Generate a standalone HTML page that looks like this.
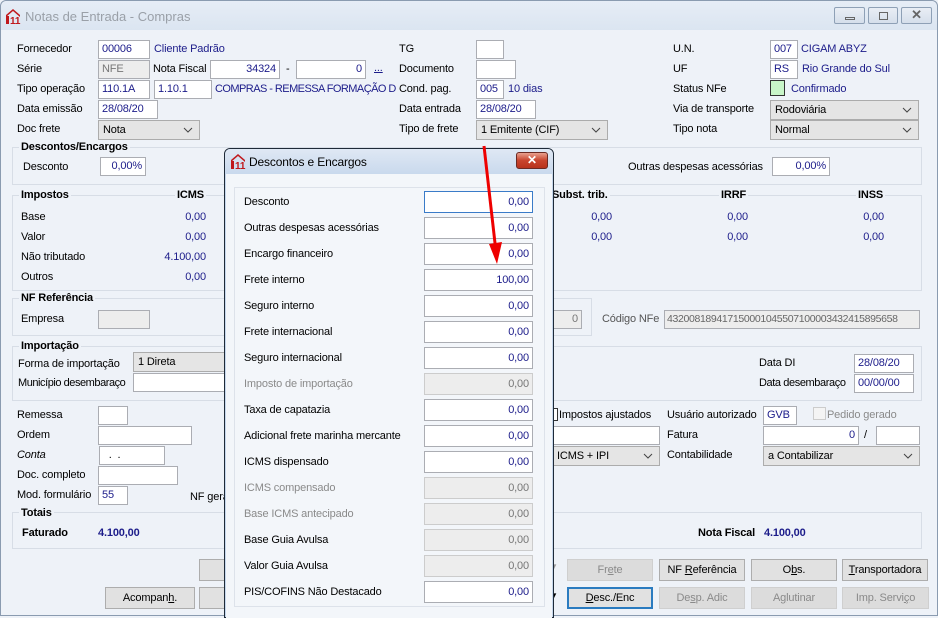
<!DOCTYPE html>
<html><head><meta charset="utf-8">
<style>
*{box-sizing:border-box;margin:0;padding:0}
body{width:938px;height:616px;overflow:hidden;font-family:"Liberation Sans",Tahoma,sans-serif;font-size:11px;letter-spacing:-0.15px;color:#000;background:#eef2f8;position:relative}
.a{position:absolute;white-space:nowrap}
.t{position:absolute;white-space:nowrap;line-height:14px;top:0}
.i{position:absolute;background:#fff;border:1px solid #abadb3;height:19px;line-height:17px;padding:0 3px;color:#1c1c8a;white-space:nowrap;overflow:hidden}
.r{text-align:right}
.g{background:#ededed;color:#777}
.s{position:absolute;background:#e5e5e5;border:1px solid #acacac;height:20px;line-height:18px;padding:0 4px;white-space:nowrap;overflow:hidden}
.s svg{position:absolute;right:6px;top:6px}
.b{font-weight:bold}
.v{color:#1c1c8a}
.box{position:absolute;border:1px solid #d7dde6}
.gt{position:absolute;font-weight:bold;background:#eef2f8;padding:0 2px;line-height:14px}
.btn{position:absolute;background:#e1e1e1;border:1px solid #adadad;height:22px;line-height:20px;text-align:center}
.dis{color:#8a8a8a;background:#dcdcdc;border-color:#cfcfcf}
.dl{color:#8a8a8a}
u{text-decoration:underline}
</style></head><body>
<div class="a" style="left:0;top:0;width:938px;height:616px;border:1px solid #8a9bb0;border-radius:6px 6px 0 0"></div>
<div class="a" style="left:1px;top:1px;width:936px;height:29px;background:linear-gradient(#e6edf6,#dbe5f1);border-radius:6px 6px 0 0"></div>
<svg class="a" style="left:5px;top:8px" width="16" height="16" viewBox="0 0 16 16"><path d="M1 7 L8 1 L15 7 L15 9 L8 3 L1 9Z" fill="#c0181c"/><rect x="1" y="8" width="3" height="8" fill="#c0181c"/><text x="5" y="16" font-size="10" font-weight="bold" fill="#c0181c" font-family="Liberation Sans">11</text></svg>
<div class="t" style="left:25px;top:10px;font-size:13px;color:#9aa0a8;letter-spacing:0">Notas de Entrada - Compras</div>
<div class="a" style="left:834px;top:7px;width:31px;height:17px;border:1px solid #8ea0b6;border-radius:2px;background:linear-gradient(#e9eef5,#d5dfeb)"><div class="a" style="left:10px;top:9px;width:10px;height:3px;border:1px solid #666"></div></div>
<div class="a" style="left:868px;top:7px;width:30px;height:17px;border:1px solid #8ea0b6;border-radius:2px;background:linear-gradient(#e9eef5,#d5dfeb)"><div class="a" style="left:10px;top:4px;width:9px;height:8px;border:1px solid #666"></div></div>
<div class="a" style="left:901px;top:7px;width:31px;height:17px;border:1px solid #8ea0b6;border-radius:2px;background:linear-gradient(#e9eef5,#d5dfeb);text-align:center;line-height:14px;font-size:13px;font-weight:bold;color:#666">✕</div>

<div class="t" style="left:17px;top:42px">Fornecedor</div>
<div class="i" style="left:98px;top:40px;width:52px">00006</div>
<div class="t v" style="left:154px;top:42px">Cliente Padrão</div>
<div class="t" style="left:17px;top:62px">Série</div>
<div class="i g" style="left:98px;top:60px;width:52px">NFE</div>
<div class="t" style="left:153px;top:62px">Nota Fiscal</div>
<div class="i r" style="left:210px;top:60px;width:70px">34324</div>
<div class="t" style="left:286px;top:62px">-</div>
<div class="i r" style="left:296px;top:60px;width:70px">0</div>
<div class="t v" style="left:374px;top:61px;text-decoration:underline">...</div>
<div class="t" style="left:17px;top:82px">Tipo operação</div>
<div class="i" style="left:98px;top:80px;width:52px">110.1A</div>
<div class="i" style="left:154px;top:80px;width:58px">1.10.1</div>
<div class="t v" style="left:215px;top:82px;letter-spacing:-0.55px">COMPRAS - REMESSA FORMAÇÃO D</div>
<div class="t" style="left:17px;top:102px">Data emissão</div>
<div class="i" style="left:98px;top:100px;width:60px">28/08/20</div>
<div class="t" style="left:17px;top:122px">Doc frete</div>
<div class="s" style="left:98px;top:120px;width:102px">Nota<svg width="10" height="6"><path d="M1 1 L5 5 L9 1" fill="none" stroke="#444"/></svg></div>

<div class="t" style="left:399px;top:42px">TG</div>
<div class="i" style="left:476px;top:40px;width:28px"></div>
<div class="t" style="left:399px;top:62px">Documento</div>
<div class="i" style="left:476px;top:60px;width:40px"></div>
<div class="t" style="left:399px;top:82px">Cond. pag.</div>
<div class="i" style="left:476px;top:80px;width:28px">005</div>
<div class="t v" style="left:508px;top:82px">10 dias</div>
<div class="t" style="left:399px;top:102px">Data entrada</div>
<div class="i" style="left:476px;top:100px;width:60px">28/08/20</div>
<div class="t" style="left:399px;top:122px">Tipo de frete</div>
<div class="s" style="left:476px;top:120px;width:132px">1 Emitente (CIF)<svg width="10" height="6"><path d="M1 1 L5 5 L9 1" fill="none" stroke="#444"/></svg></div>

<div class="t" style="left:673px;top:42px">U.N.</div>
<div class="i" style="left:770px;top:40px;width:28px">007</div>
<div class="t v" style="left:801px;top:42px">CIGAM ABYZ</div>
<div class="t" style="left:673px;top:62px">UF</div>
<div class="i" style="left:770px;top:60px;width:28px">RS</div>
<div class="t v" style="left:802px;top:62px">Rio Grande do Sul</div>
<div class="t" style="left:673px;top:82px">Status NFe</div>
<div class="a" style="left:770px;top:80px;width:15px;height:16px;background:#c8f5c8;border:1px solid #333"></div>
<div class="t v" style="left:791px;top:82px">Confirmado</div>
<div class="t" style="left:673px;top:102px">Via de transporte</div>
<div class="s" style="left:770px;top:100px;width:149px">Rodoviária<svg width="10" height="6"><path d="M1 1 L5 5 L9 1" fill="none" stroke="#444"/></svg></div>
<div class="t" style="left:673px;top:122px">Tipo nota</div>
<div class="s" style="left:770px;top:120px;width:149px">Normal<svg width="10" height="6"><path d="M1 1 L5 5 L9 1" fill="none" stroke="#444"/></svg></div>

<div class="box" style="left:12px;top:147px;width:910px;height:38px"></div>
<div class="gt" style="left:19px;top:140px">Descontos/Encargos</div>
<div class="t" style="left:23px;top:160px">Desconto</div>
<div class="i r" style="left:100px;top:157px;width:46px">0,00%</div>
<div class="t" style="left:628px;top:160px">Outras despesas acessórias</div>
<div class="i r" style="left:772px;top:157px;width:58px">0,00%</div>

<div class="box" style="left:12px;top:195px;width:910px;height:96px"></div>
<div class="gt" style="left:19px;top:188px">Impostos</div>
<div class="gt" style="left:175px;top:188px">ICMS</div>
<div class="gt" style="left:550px;top:188px">Subst. trib.</div>
<div class="gt" style="left:719px;top:188px">IRRF</div>
<div class="gt" style="left:856px;top:188px">INSS</div>
<div class="t" style="left:21px;top:210px">Base</div>
<div class="t" style="left:21px;top:230px">Valor</div>
<div class="t" style="left:21px;top:250px">Não tributado</div>
<div class="t" style="left:21px;top:270px">Outros</div>
<div class="t v r" style="left:140px;width:66px;top:210px">0,00</div>
<div class="t v r" style="left:140px;width:66px;top:230px">0,00</div>
<div class="t v r" style="left:140px;width:66px;top:250px">4.100,00</div>
<div class="t v r" style="left:140px;width:66px;top:270px">0,00</div>
<div class="t v r" style="left:560px;width:52px;top:210px">0,00</div>
<div class="t v r" style="left:560px;width:52px;top:230px">0,00</div>
<div class="t v r" style="left:696px;width:52px;top:210px">0,00</div>
<div class="t v r" style="left:696px;width:52px;top:230px">0,00</div>
<div class="t v r" style="left:832px;width:52px;top:210px">0,00</div>
<div class="t v r" style="left:832px;width:52px;top:230px">0,00</div>

<div class="box" style="left:12px;top:298px;width:580px;height:38px"></div>
<div class="gt" style="left:19px;top:291px">NF Referência</div>
<div class="t" style="left:21px;top:312px">Empresa</div>
<div class="i g" style="left:98px;top:310px;width:52px"></div>
<div class="i g r" style="left:540px;top:310px;width:42px;color:#777">0</div>
<div class="t" style="left:602px;top:312px;color:#555">Código NFe</div>
<div class="i g" style="left:664px;top:310px;width:256px;color:#666;padding:0 2px;font-size:10.5px;letter-spacing:-0.35px">43200818941715000104550710000343241589565&#56;</div>

<div class="box" style="left:12px;top:346px;width:910px;height:55px"></div>
<div class="gt" style="left:19px;top:339px">Importação</div>
<div class="t" style="left:18px;top:357px">Forma de importação</div>
<div class="s" style="left:133px;top:352px;width:100px">1 Direta</div>
<div class="t" style="left:18px;top:376px;letter-spacing:-0.45px">Município desembaraço</div>
<div class="i" style="left:133px;top:373px;width:100px"></div>
<div class="t" style="left:759px;top:356px">Data DI</div>
<div class="i" style="left:854px;top:354px;width:60px">28/08/20</div>
<div class="t" style="left:759px;top:376px;letter-spacing:-0.4px">Data desembaraço</div>
<div class="i" style="left:854px;top:374px;width:60px">00/00/00</div>

<div class="t" style="left:17px;top:408px">Remessa</div>
<div class="i" style="left:98px;top:406px;width:30px"></div>
<div class="t" style="left:17px;top:428px">Ordem</div>
<div class="i" style="left:98px;top:426px;width:94px"></div>
<div class="t" style="left:17px;top:448px;font-style:italic">Conta</div>
<div class="i" style="left:99px;top:446px;width:66px;color:#000">&nbsp;&nbsp;.&nbsp;&nbsp;.</div>
<div class="t" style="left:17px;top:468px">Doc. completo</div>
<div class="i" style="left:98px;top:466px;width:80px"></div>
<div class="t" style="left:17px;top:488px">Mod. formulário</div>
<div class="i" style="left:98px;top:486px;width:30px">55</div>
<div class="t" style="left:190px;top:490px">NF gera</div>

<div class="a" style="left:551px;top:408px;width:7px;height:13px;border:1px solid #333;border-left:none;background:#fff"></div>
<div class="t" style="left:559px;top:408px">Impostos ajustados</div>
<div class="t" style="left:667px;top:408px">Usuário autorizado</div>
<div class="i" style="left:763px;top:406px;width:34px">GVB</div>
<div class="a" style="left:813px;top:407px;width:13px;height:13px;border:1px solid #ccc;background:#f4f4f4"></div>
<div class="t" style="left:827px;top:408px;color:#8a8a8a">Pedido gerado</div>
<div class="i" style="left:552px;top:426px;width:108px"></div>
<div class="t" style="left:667px;top:428px">Fatura</div>
<div class="i r" style="left:763px;top:426px;width:96px">0</div>
<div class="t" style="left:864px;top:428px">/</div>
<div class="i" style="left:876px;top:426px;width:44px"></div>
<div class="s" style="left:552px;top:446px;width:108px">ICMS + IPI<svg width="10" height="6"><path d="M1 1 L5 5 L9 1" fill="none" stroke="#444"/></svg></div>
<div class="t" style="left:667px;top:448px">Contabilidade</div>
<div class="s" style="left:763px;top:446px;width:157px">a Contabilizar<svg width="10" height="6"><path d="M1 1 L5 5 L9 1" fill="none" stroke="#444"/></svg></div>

<div class="box" style="left:12px;top:512px;width:910px;height:37px"></div>
<div class="gt" style="left:19px;top:506px">Totais</div>
<div class="t b" style="left:22px;top:526px">Faturado</div>
<div class="t b v" style="left:98px;top:526px">4.100,00</div>
<div class="t b" style="left:698px;top:526px">Nota Fiscal</div>
<div class="t b v" style="left:764px;top:526px">4.100,00</div>

<div class="btn" style="left:199px;top:559px;width:30px"></div>
<div class="btn" style="left:199px;top:587px;width:30px"></div>
<div class="btn" style="left:105px;top:587px;width:90px">Acompan<u>h</u>.</div>
<div class="btn dis" style="left:567px;top:559px;width:86px">Fr<u>e</u>te</div>
<div class="btn" style="left:659px;top:559px;width:86px">NF <u>R</u>eferência</div>
<div class="btn" style="left:751px;top:559px;width:86px">O<u>b</u>s.</div>
<div class="btn" style="left:842px;top:559px;width:86px"><u>T</u>ransportadora</div>
<div class="btn" style="left:567px;top:587px;width:86px;border:2px solid #2a7bc0;line-height:18px"><u>D</u>esc./Enc</div>
<div class="btn dis" style="left:659px;top:587px;width:86px">De<u>s</u>p. Adic</div>
<div class="btn dis" style="left:751px;top:587px;width:86px">A<u>g</u>lutinar</div>
<div class="btn dis" style="left:842px;top:587px;width:87px">Imp. Servi<u>ç</u>o</div>
<div class="a" style="left:550px;top:562px;font-size:8px;color:#999">▼</div>
<div class="a" style="left:550px;top:591px;font-size:8px;color:#000">▼</div>

<div class="a" style="left:224px;top:148px;width:330px;height:470px;border:1px solid #1e2a38;border-radius:6px 6px 0 0;background:#c6d7ec"></div>
<div class="a" style="left:225px;top:149px;width:328px;height:25px;background:linear-gradient(#dfe8f4,#c9d9ed);border-radius:5px 5px 0 0"></div>
<svg class="a" style="left:230px;top:153px" width="16" height="16" viewBox="0 0 16 16"><path d="M1 7 L8 1 L15 7 L15 9 L8 3 L1 9Z" fill="#c0181c"/><rect x="1" y="8" width="3" height="8" fill="#c0181c"/><text x="5" y="16" font-size="10" font-weight="bold" fill="#c0181c" font-family="Liberation Sans">11</text></svg>
<div class="t" style="left:249px;top:155px;font-size:12px">Descontos e Encargos</div>
<div class="a" style="left:516px;top:152px;width:32px;height:17px;border:1px solid #6b2a23;border-radius:3px;background:linear-gradient(#e9a08f,#c8442d 50%,#b8331d);color:#fff;text-align:center;font-weight:bold;font-size:12px;line-height:15px">✕</div>
<div class="a" style="left:226px;top:174px;width:326px;height:444px;background:#f3f6fa"></div>
<div class="a" style="left:234px;top:187px;width:311px;height:420px;border:1px solid #dde2ea"></div>

<div class="t" style="left:244px;top:195px">Desconto</div>
<div class="i r" style="left:424px;top:191px;width:109px;height:22px;line-height:20px;border-color:#3a7bc8">0,00</div>
<div class="t" style="left:244px;top:221px">Outras despesas acessórias</div>
<div class="i r" style="left:424px;top:217px;width:109px;height:22px;line-height:20px">0,00</div>
<div class="t" style="left:244px;top:247px">Encargo financeiro</div>
<div class="i r" style="left:424px;top:243px;width:109px;height:22px;line-height:20px">0,00</div>
<div class="t" style="left:244px;top:273px">Frete interno</div>
<div class="i r" style="left:424px;top:269px;width:109px;height:22px;line-height:20px">100,00</div>
<div class="t" style="left:244px;top:299px">Seguro interno</div>
<div class="i r" style="left:424px;top:295px;width:109px;height:22px;line-height:20px">0,00</div>
<div class="t" style="left:244px;top:325px">Frete internacional</div>
<div class="i r" style="left:424px;top:321px;width:109px;height:22px;line-height:20px">0,00</div>
<div class="t" style="left:244px;top:351px">Seguro internacional</div>
<div class="i r" style="left:424px;top:347px;width:109px;height:22px;line-height:20px">0,00</div>
<div class="t dl" style="left:244px;top:377px">Imposto de importação</div>
<div class="i r g" style="left:424px;top:373px;width:109px;height:22px;line-height:20px;border-color:#ccc">0,00</div>
<div class="t" style="left:244px;top:403px">Taxa de capatazia</div>
<div class="i r" style="left:424px;top:399px;width:109px;height:22px;line-height:20px">0,00</div>
<div class="t" style="left:244px;top:429px">Adicional frete marinha mercante</div>
<div class="i r" style="left:424px;top:425px;width:109px;height:22px;line-height:20px">0,00</div>
<div class="t" style="left:244px;top:455px">ICMS dispensado</div>
<div class="i r" style="left:424px;top:451px;width:109px;height:22px;line-height:20px">0,00</div>
<div class="t dl" style="left:244px;top:481px">ICMS compensado</div>
<div class="i r g" style="left:424px;top:477px;width:109px;height:22px;line-height:20px;border-color:#ccc">0,00</div>
<div class="t dl" style="left:244px;top:507px">Base ICMS antecipado</div>
<div class="i r g" style="left:424px;top:503px;width:109px;height:22px;line-height:20px;border-color:#ccc">0,00</div>
<div class="t" style="left:244px;top:533px">Base Guia Avulsa</div>
<div class="i r g" style="left:424px;top:529px;width:109px;height:22px;line-height:20px;border-color:#ccc">0,00</div>
<div class="t" style="left:244px;top:559px">Valor Guia Avulsa</div>
<div class="i r g" style="left:424px;top:555px;width:109px;height:22px;line-height:20px;border-color:#ccc">0,00</div>
<div class="t" style="left:244px;top:585px">PIS/COFINS Não Destacado</div>
<div class="i r" style="left:424px;top:581px;width:109px;height:22px;line-height:20px">0,00</div>

<svg class="a" style="left:470px;top:140px" width="40" height="130"><path d="M14 6 L26 112" stroke="#e00" stroke-width="3" fill="none"/><path d="M19 104 L27 124 L32 102Z" fill="#e00"/></svg>
</body></html>
